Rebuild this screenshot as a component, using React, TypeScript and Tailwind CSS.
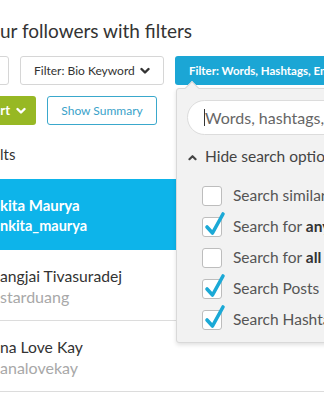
import React from 'react';

const Chevron = ({ className }: { className?: string }) => (
  <svg viewBox="0 0 10 8" className={className} fill="none" stroke="currentColor" strokeWidth={2.4} strokeLinecap="round" strokeLinejoin="round">
    <path d="M1.5 2 L5 5.5 L8.5 2" />
  </svg>
);

const Checkbox = ({ checked }: { checked: boolean }) => (
  <div className="relative w-[20px] h-[20px] shrink-0 rounded-[3px] border border-[#bdbdbd] bg-white">
    {checked && (
      <svg viewBox="0 0 22 26" className="absolute left-[1px] top-[-7px] w-[22px] h-[26px]" fill="none" stroke="#1ba9d6" strokeWidth={3.6} strokeLinecap="round" strokeLinejoin="round">
        <path d="M3 16 L8.5 22 L19 3" />
      </svg>
    )}
  </div>
);

const options = [
  { label: <>Search similar words</>, checked: false },
  { label: <>Search for <b className="font-bold text-[#333]">any</b> words</>, checked: true },
  { label: <>Search for <b className="font-bold text-[#333]">all</b> words</>, checked: false },
  { label: <>Search Posts</>, checked: true },
  { label: <>Search Hashtags</>, checked: true },
];

const results = [
  { name: 'kita Maurya', handle: 'nkita_maurya', active: true },
  { name: 'angjai Tivasuradej', handle: 'starduang', active: false },
  { name: 'na Love Kay', handle: 'analovekay', active: false },
];

export default function App() {
  return (
    <div className="relative w-[324px] h-[400px] overflow-hidden bg-white font-['Lato','Liberation_Sans',sans-serif] text-[#333]">
      {/* Title */}
      <div className="pt-[19px] h-[44px] text-[19px] leading-[24px] whitespace-nowrap text-[#333]">ur followers with filters</div>

      {/* Filter buttons */}
      <div className="mt-[12px] flex gap-[11px] h-[29px] whitespace-nowrap">
        <div className="ml-[-50px] w-[59px] shrink-0 rounded-[3px] border border-[#d6d6d6] bg-white" />
        <div className="w-[144px] shrink-0 flex items-center justify-between pl-[13px] pr-[13px] rounded-[3px] border border-[#d6d6d6] bg-white text-[12px] text-[#333]">
          <span>Filter: Bio Keyword</span>
          <Chevron className="w-[10px] h-[8px] text-[#333]" />
        </div>
        <div className="w-[200px] shrink-0 flex items-center pl-[14px] rounded-[3px] bg-[#1ba6d5] text-[11.5px] font-bold text-white">
          Filter: Words, Hashtags, Emojis
        </div>
      </div>

      {/* Action buttons */}
      <div className="mt-[11px] flex gap-[11px] h-[29px] whitespace-nowrap">
        <div className="ml-[-60px] w-[96px] shrink-0 flex items-center justify-end gap-[6px] pr-[10px] rounded-[3px] bg-[#97b824] text-[13px] font-bold text-white">
          <span>rt</span>
          <Chevron className="w-[10px] h-[8px]" />
        </div>
        <div className="w-[110px] shrink-0 flex items-center justify-center rounded-[3px] border border-[#3aa8cc] bg-white text-[12px] text-[#3aa2c9]">
          Show Summary
        </div>
      </div>

      {/* Results */}
      <div className="mt-[20px] h-[34px] text-[15px] leading-[18px] text-[#333]">lts</div>
      <div className="flex flex-col">
        {results.map((r) => (
          <div
            key={r.handle}
            className={`h-[71px] pt-[16px] whitespace-nowrap ${r.active ? 'bg-[#0db4ea] text-white font-bold' : 'border-b border-[#dcdcdc] text-[#333]'}`}
          >
            <div className={`${r.active ? 'text-[15px]' : 'text-[15.7px]'} leading-[20px]`}>{r.name}</div>
            <div className={`leading-[22px] ${r.active ? 'text-[14.5px] text-white' : 'text-[16px] text-[#a8a8a8]'}`}>{r.handle}</div>
          </div>
        ))}
      </div>

      {/* Dropdown panel */}
      <div className="absolute left-[176px] top-[88px] w-[200px] h-[255px] rounded-[3px] border border-[#d9d9d9] bg-[#f2f2f2] shadow-[0_2px_4px_rgba(0,0,0,0.12)] pt-[11px] pl-[10px]">
        <div className="absolute left-[10px] top-[-6px] w-[10px] h-[10px] rotate-45 bg-[#f2f2f2] border-l border-t border-[#d9d9d9]" />
        <div className="flex items-center h-[35px] rounded-full border border-[#dcdcdc] bg-white pl-[16px] whitespace-nowrap">
          <span className="w-[1px] h-[17px] bg-[#333]" />
          <span className="text-[16px] text-[#666]">Words, hashtags, emojis</span>
        </div>
        <div className="mt-[12px] flex items-center gap-[8px] h-[20px] whitespace-nowrap text-[15.5px] text-[#444]">
          <svg viewBox="0 0 10 8" className="w-[9px] h-[7px] ml-[1px]" fill="none" stroke="#444" strokeWidth={2.4} strokeLinecap="round" strokeLinejoin="round">
            <path d="M1.5 6 L5 2.5 L8.5 6" />
          </svg>
          <span>Hide search options</span>
        </div>
        <div className="mt-[19px] ml-[15px] flex flex-col gap-[11px]">
          {options.map((o, i) => (
            <div key={i} className="flex items-center gap-[11px] h-[20px] whitespace-nowrap text-[15.5px] text-[#555]">
              <Checkbox checked={o.checked} />
              <span>{o.label}</span>
            </div>
          ))}
        </div>
      </div>
    </div>
  );
}
